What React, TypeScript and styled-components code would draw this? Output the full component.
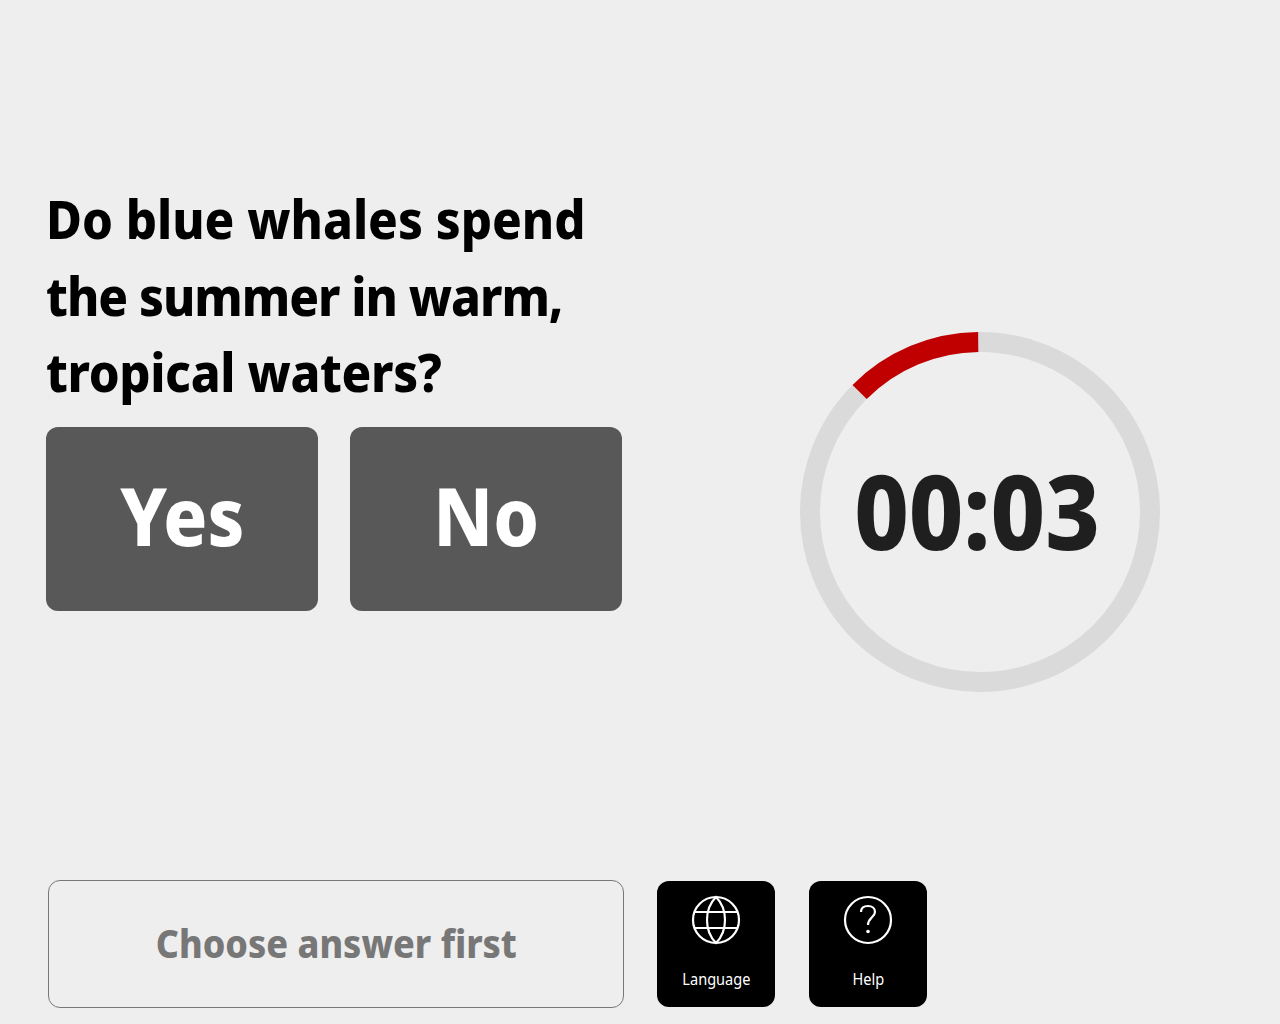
import styled, { createGlobalStyle } from "styled-components";

const GlobalStyle = createGlobalStyle`
    html, body {
        margin: 0;
        padding: 0;
        background: #EEEEEE;
        font-family: "Noto Sans", "Lato", sans-serif;
    }
`

const Page = styled.div`
    width: 1280px;
    height: 1024px;
    overflow: hidden;
    display: flex;
    flex-direction: column;
    justify-content: space-between;
    box-sizing: border-box;
    padding: 180px 0 16px 46px;
`

const Main = styled.div`
    display: flex;
    align-items: flex-start;
    gap: 178px;
`

const QuestionBlock = styled.div`
    width: 576px;
`

// the reference face is narrower than any installed one
const Narrow = styled.span`
    display: inline-block;
    transform: scaleX(0.91);
`

const Question = styled.h1`
    margin: 0 0 17px 0;
    font-size: 54px;
    line-height: 76.5px;
    font-weight: 800;
    color: #000000;
    white-space: nowrap;
    transform: scaleX(0.91);
    transform-origin: left center;
`

const QuestionLine = styled.span<{ $tracking: number }>`
    display: block;
    letter-spacing: ${(p) => p.$tracking}px;
`

const Answers = styled.div`
    display: flex;
    gap: 32px;
`

const AnswerButton = styled.button`
    width: 272px;
    height: 184px;
    padding: 0 0 8px;
    border: none;
    border-radius: 12px;
    background: #585858;
    color: #FFFFFF;
    font-family: inherit;
    font-size: 80px;
    font-weight: 800;
`

const Timer = styled.div`
    position: relative;
    width: 360px;
    height: 360px;
    margin-top: 152px;
    display: flex;
    align-items: center;
    justify-content: center;
`

const Dial = styled.svg`
    position: absolute;
    inset: 0;
`

const TimerText = styled.div`
    font-size: 104px;
    font-weight: 800;
    color: #1F1F1F;
    line-height: 1;
    margin: 0 5px 4px 0;
`

const Footer = styled.div`
    display: flex;
    align-items: center;
    padding-left: 2px;
`

const SubmitButton = styled.button`
    width: 576px;
    height: 128px;
    padding: 0 0 3px;
    box-sizing: border-box;
    border: 1px solid #777777;
    border-radius: 12px;
    background: transparent;
    color: #777777;
    font-family: inherit;
    font-size: 39.5px;
    font-weight: 800;
    margin-right: 33px;
`

const ToolButton = styled.button`
    width: 118px;
    height: 126px;
    margin-right: 34px;
    padding: 13px 0 0;
    border: none;
    border-radius: 12px;
    background: #000000;
    color: #FFFFFF;
    font-family: inherit;
    font-size: 16px;
    display: flex;
    flex-direction: column;
    align-items: center;
    gap: 22px;
`

const Icon = styled.svg`
    width: 52px;
    height: 52px;
    fill: none;
    stroke: #FFFFFF;
    stroke-width: 2.200;
`

const progress = 0.1235
const radius = 170
const circumference = 2 * Math.PI * radius

export default function App() {
    return (
        <>
            <GlobalStyle />
            <Page>
                <Main>
                    <QuestionBlock>
                        <Question>
                            <QuestionLine $tracking={0}>Do blue whales spend</QuestionLine>
                            <QuestionLine $tracking={-1.1}>the summer in warm,</QuestionLine>
                            <QuestionLine $tracking={-0.4}>tropical waters?</QuestionLine>
                        </Question>
                        <Answers>
                            <AnswerButton><Narrow>Yes</Narrow></AnswerButton>
                            <AnswerButton><Narrow>No</Narrow></AnswerButton>
                        </Answers>
                    </QuestionBlock>
                    <Timer>
                        <Dial width="360" height="360" viewBox="0 0 360 360">
                            <circle cx="180" cy="180" r={radius} fill="none" stroke="#DADADA" strokeWidth="20" />
                            <circle
                                cx="180"
                                cy="180"
                                r={radius}
                                fill="none"
                                stroke="#C00000"
                                strokeWidth="20"
                                strokeDasharray={`${circumference * progress} ${circumference}`}
                                transform="rotate(-90.6 180 180) scale(1 -1) translate(0 -360)"
                            />
                        </Dial>
                        <TimerText><Narrow>00:03</Narrow></TimerText>
                    </Timer>
                </Main>
                <Footer>
                    <SubmitButton><Narrow>Choose answer first</Narrow></SubmitButton>
                    <ToolButton>
                        <Icon viewBox="0 0 52 52">
                            <circle cx="26" cy="26" r="23" />
                            <path d="M26 3C14 15 14 37 26 49C38 37 38 15 26 3Z" />
                            <path d="M5 18H47M5 34H47" />
                        </Icon>
                        <Narrow>Language</Narrow>
                    </ToolButton>
                    <ToolButton>
                        <Icon viewBox="0 0 52 52">
                            <circle cx="26" cy="26" r="23" />
                            <path d="M19 18C19 14 22 12 26 12C30 12 33 14.500 33 18C33 23 26 24 26 31" />
                            <circle cx="26" cy="37.500" r="1.800" fill="#FFFFFF" stroke="none" />
                        </Icon>
                        <Narrow>Help</Narrow>
                    </ToolButton>
                </Footer>
            </Page>
        </>
    )
}
